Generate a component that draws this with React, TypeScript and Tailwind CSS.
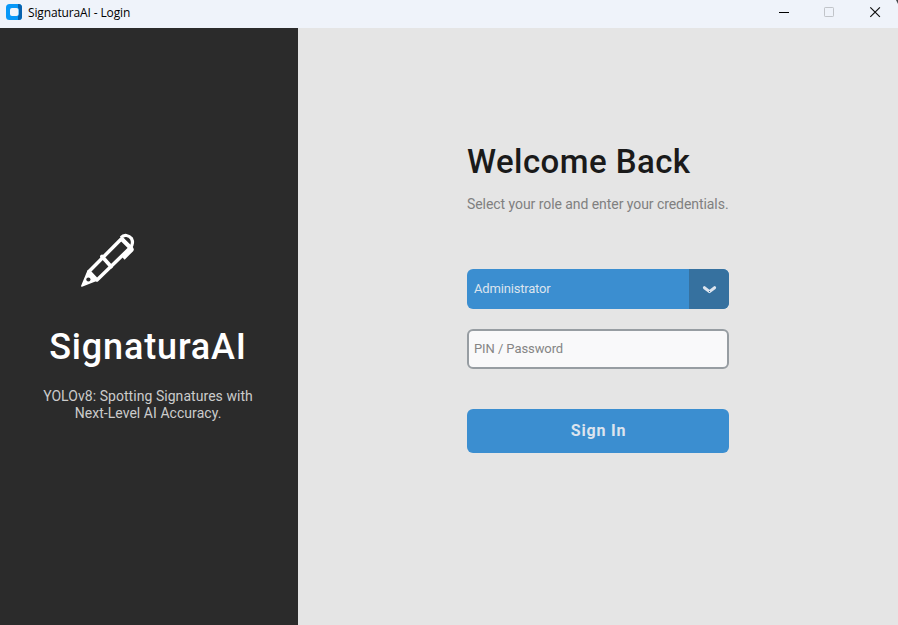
function PenIcon() {
  return (
    <svg className="block h-[70px] w-[80px]" viewBox="0 0 80 70" fill="none" stroke="#fff" strokeLinejoin="round">
      <path d="M19 46.5 51.5 13.7 60.5 22.5 27 55Z" strokeWidth="3.5" />
      <path d="M11.8 61 18 46 27 55Z" fill="#fff" strokeWidth="1.5" />
      <circle cx="18.4" cy="54.5" r="2.1" fill="#2b2b2b" stroke="none" />
      <path d="M32 31.5 41 41.5" strokeWidth="3.8" strokeLinecap="round" />
      <path d="M51 12.5C54 9.3 59 10 61.5 13.5 63 16.5 62.5 20 60.5 22.5" strokeWidth="3.2" />
      <path d="M51.5 13.8 60.2 22.5" strokeWidth="4.2" />
      <path d="M60 21.5 61.5 24.5 53 33" strokeWidth="4.6" />
    </svg>
  );
}

function TitleBar() {
  return (
    <header className="flex h-7 shrink-0 bg-[#eff3fa]">
      <svg className="ml-1.5 mt-1 h-4 w-4" viewBox="0 0 16 16">
        <rect width="16" height="16" rx="3.5" fill="#0798f8" />
        <path d="M12 0h.5A3.5 3.5 0 0 1 16 3.5v9a3.5 3.5 0 0 1-3.5 3.5H12V12l1-1V5l-1-1Z" fill="#0862ae" />
        <rect x="4" y="4" width="8.5" height="8" rx="2" fill="#f2f5fb" />
      </svg>
      <span className="ml-1.5 mt-[3px] text-[12px] leading-[20px] tracking-[-0.14px] text-black [font-family:'Open_Sans','Noto_Sans',sans-serif]">
        SignaturaAI - Login
      </span>
      <svg className="ml-auto h-7 w-[138px]" viewBox="0 0 138 28" fill="none">
        <path d="M19 12.5h10" stroke="#000" />
        <rect x="64.5" y="7.5" width="9" height="9" rx=".7" stroke="#c1c4c9" />
        <path d="m110.3 7.3 9.6 9.6m0-9.6-9.6 9.6" stroke="#111" strokeWidth="1.2" />
        <path d="M136 0h2v4Z" fill="#45474b" />
      </svg>
    </header>
  );
}

export default function App() {
  return (
    <div className="flex h-[625px] w-[898px] flex-col overflow-hidden [font-family:Roboto,sans-serif]">
      <TitleBar />
      <div className="flex flex-1">
        <aside className="w-[298px] shrink-0 bg-[#2b2b2b] pt-[197px]">
          <div className="pl-[70px]">
            <PenIcon />
          </div>
          <h1 className="mt-[31px] pr-0.5 text-center text-[36px] font-medium leading-[42px] tracking-[0.85px] text-white">SignaturaAI</h1>
          <p className="mt-5 pr-0.5 text-center text-[14px] leading-[17px] tracking-[0.05px] text-[#cccccc]">
            YOLOv8: Spotting Signatures with
            <br />
            Next-Level AI Accuracy.
          </p>
        </aside>
        <main className="flex-1 bg-[#e5e5e5] pl-[169px] pt-[114px]">
          <h2 className="whitespace-nowrap text-[33px] font-medium leading-[40px] tracking-[0.43px] text-[#1a1a1a]">Welcome Back</h2>
          <p className="mt-3 whitespace-nowrap text-[14px] leading-5 tracking-[-0.06px] text-[#808080]">Select your role and enter your credentials.</p>
          <button className="mt-[55px] flex h-10 w-[262px] overflow-hidden rounded-md bg-[#3b8ed0] text-left text-[13px] leading-10 text-[#dce4ee]">
            <span className="w-[222px] pl-[7px] tracking-[-0.18px]">Administrator</span>
            <span className="h-10 w-10 bg-[#36719f]">
              <svg className="h-10 w-10" viewBox="0 0 40 40" fill="none">
                <path d="m15.4 18.7 5.1 3.9 5.1-3.9" stroke="#dce4ee" strokeWidth="3" strokeLinecap="round" strokeLinejoin="round" />
                <path d="M20 22h1v1h-1z" fill="#36719f" />
              </svg>
            </span>
          </button>
          <input
            className="mt-5 block h-10 w-[262px] rounded-md border-2 border-[#979da2] bg-[#f9f9fa] px-[5px] pb-0.5 text-[13px] tracking-[-0.08px] placeholder:text-[#858585] outline-none"
            placeholder="PIN / Password"
          />
          <button className="mt-10 block h-11 w-[262px] rounded-md bg-[#3b8ed0] pl-px text-[16px] font-bold tracking-[0.8px] text-[#dce4ee]">
            Sign In
          </button>
        </main>
      </div>
    </div>
  );
}
